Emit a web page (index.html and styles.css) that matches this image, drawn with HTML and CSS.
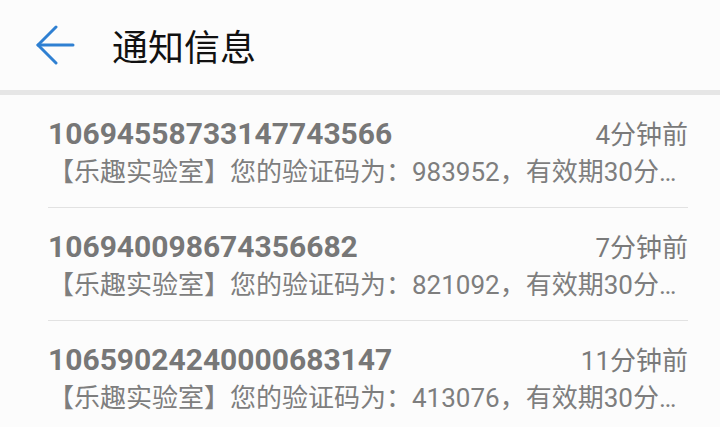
FILE: index.html
```html
<!DOCTYPE html>
<html lang="zh-CN">
<head>
    <meta charset="UTF-8">
    <meta name="viewport" content="width=device-width, initial-scale=1.0">
    <title>通知信息</title>
    <link rel="stylesheet" href="styles.css">
</head>
<body>

    <header class="top-bar">
        <!-- back arrow -->
        <button class="back-btn" aria-label="返回">
            <svg width="40" height="40" viewBox="0 0 40 40">
                <polyline points="20,2 2,20 20,38" fill="none" stroke="#2f80d2" stroke-width="3" stroke-linecap="round" stroke-linejoin="round"/>
                <line x1="2" y1="20" x2="37" y2="20" stroke="#2f80d2" stroke-width="3" stroke-linecap="round"/>
            </svg>
        </button>
        <h1>通知信息</h1>
    </header>

    <ul class="msg-list">
        <li class="msg">
            <div class="msg-head">
                <span class="sender">10694558733147743566</span>
                <span class="time">4分钟前</span>
            </div>
            <div class="snippet">【乐趣实验室】您的验证码为：983952，有效期30分…</div>
        </li>
        <li class="msg">
            <div class="msg-head">
                <span class="sender">106940098674356682</span>
                <span class="time">7分钟前</span>
            </div>
            <div class="snippet">【乐趣实验室】您的验证码为：821092，有效期30分…</div>
        </li>
        <li class="msg">
            <div class="msg-head">
                <span class="sender">10659024240000683147</span>
                <span class="time">11分钟前</span>
            </div>
            <div class="snippet">【乐趣实验室】您的验证码为：413076，有效期30分…</div>
        </li>
    </ul>

</body>
</html>
```

FILE: styles.css
```css
body {
    margin: 0;
    background-color: #fcfcfc;
    font-family: Roboto, "Noto Sans CJK SC", sans-serif;
    overflow: hidden;
}

.top-bar {
    display: flex;
    align-items: center;
    height: 90px;
    padding-left: 36px;
    border-bottom: 5px solid #e6e6e6;
}

.back-btn {
    width: 40px;
    height: 40px;
    padding: 0;
    border: none;
    background: none;
    display: flex;
}

.top-bar h1 {
    margin: 0 0 0 36px;
    font-size: 36px;
    font-weight: normal;
    color: #111;
}

.msg-list {
    list-style: none;
    margin: 0;
    padding: 0 32px 0 48px;
}

.msg {
    padding: 21px 0 0;
    height: 91px;
    border-bottom: 1px solid #e2e2e2;
}

.msg-head {
    display: flex;
    justify-content: space-between;
    align-items: baseline;
    line-height: 36px;
}

.sender {
    font-size: 30px;
    font-weight: bold;
    color: #777;
}

.time {
    font-size: 26px;
    color: #7a7a7a;
}

.snippet {
    font-size: 26px;
    line-height: 34px;
    margin-top: 2px;
    color: #7e7e7e;
    white-space: nowrap;
}
```
